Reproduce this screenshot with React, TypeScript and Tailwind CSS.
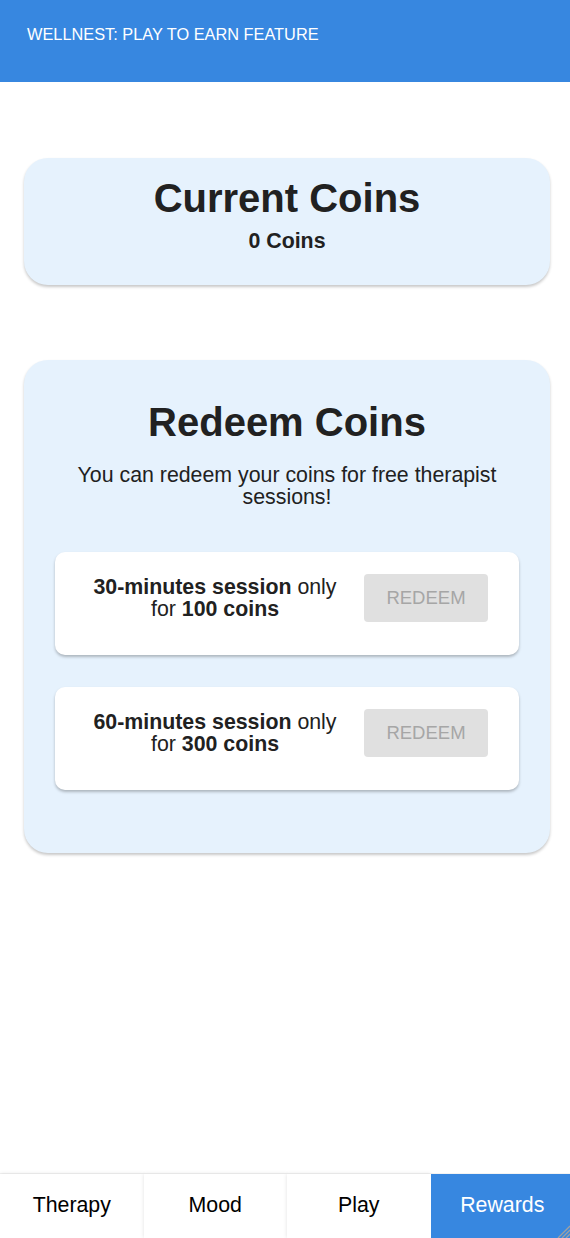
import React from "react";

const font = { fontFamily: '"Liberation Sans", Arial, Helvetica, sans-serif' };

function SessionCard({ minutes, coins }: { minutes: number; coins: number }) {
  return (
    <div className="flex items-center gap-[20px] rounded-[10px] bg-white pl-[31px] pr-[31px] pt-[22px] pb-[33px] shadow-[0_2px_3px_rgba(0,0,0,0.25)]">
      <div className="flex-1 text-center text-[21.33px] leading-[22px] text-[#212121]">
        <b>{minutes}-minutes session</b> only for <b>{coins} coins</b>
      </div>
      <button className="h-[48px] w-[124px] rounded-[4px] bg-[#e0e0e0] text-[18.5px] text-[#a6a6a6]">
        REDEEM
      </button>
    </div>
  );
}

export default function App() {
  const tabs = ["Therapy", "Mood", "Play", "Rewards"];
  return (
    <div style={font} className="h-[1238px] w-[570px] overflow-hidden bg-white">
      <div className="flex h-[1238px] w-[574px] flex-col">
        <header className="h-[82px] shrink-0 bg-[#3787e0] pl-[27px] pt-[24px] text-[16.33px] leading-[20px] text-white">
          WELLNEST: PLAY TO EARN FEATURE
        </header>
        <main className="flex flex-1 flex-col gap-[75px] px-[24px] pt-[76px]">
          <section className="flex flex-col items-center rounded-[24px] bg-[#e6f2fd] pt-[16px] pb-[31px] shadow-[0_2px_3px_rgba(0,0,0,0.22)]">
            <h1 className="text-[40px] font-bold leading-[48px] text-[#212121]">Current Coins</h1>
            <p className="mt-[6px] text-[21.33px] font-bold leading-[26px] text-[#212121]">0 Coins</p>
          </section>
          <section className="flex flex-col rounded-[24px] bg-[#e6f2fd] px-[31px] pt-[38px] pb-[63px] shadow-[0_2px_3px_rgba(0,0,0,0.22)]">
            <h2 className="text-center text-[40px] font-bold leading-[48px] text-[#212121]">Redeem Coins</h2>
            <p className="mt-[18px] text-center text-[21.33px] leading-[22px] text-[#212121]">
              You can redeem your coins for free therapist sessions!
            </p>
            <div className="mt-[44px] flex flex-col gap-[32px]">
              <SessionCard minutes={30} coins={100} />
              <SessionCard minutes={60} coins={300} />
            </div>
          </section>
        </main>
        <nav className="flex h-[65px] shrink-0 border-t border-[#f3f3f3]">
          {tabs.map((t) => (
            <div
              key={t}
              className={
                t === "Rewards"
                  ? "flex flex-1 items-center justify-center bg-[#3787e0] text-[21.33px] text-white"
                  : "flex flex-1 items-center justify-center bg-white text-[21.33px] text-black shadow-[0_0_4px_rgba(0,0,0,0.12)]"
              }
            >
              {t}
            </div>
          ))}
        </nav>
      </div>
      <svg className="fixed bottom-0 right-0" style={{ left: 556, top: 1224 }} width="14" height="14" viewBox="0 0 14 14">
        <line x1="14" y1="2" x2="2" y2="14" stroke="#a0a0a0" strokeWidth="1.3" />
        <line x1="14" y1="6" x2="6" y2="14" stroke="#a0a0a0" strokeWidth="1.3" />
        <line x1="14" y1="10" x2="10" y2="14" stroke="#a0a0a0" strokeWidth="1.3" />
      </svg>
    </div>
  );
}
